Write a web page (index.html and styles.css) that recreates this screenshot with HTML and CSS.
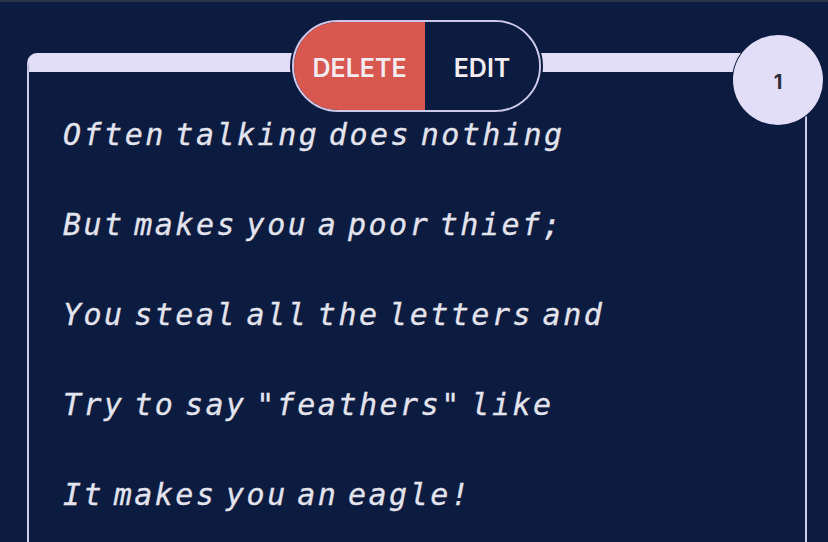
FILE: index.html
```html
<!DOCTYPE html>
<html lang="en">
<head>
<meta charset="utf-8">
<title>Poem card</title>
<link rel="stylesheet" href="styles.css">
</head>
<body>
<div class="top-strip"></div>
<main class="card">
  <div class="actions">
    <button class="btn btn-delete">DELETE</button>
    <button class="btn btn-edit">EDIT</button>
  </div>
  <div class="badge">1</div>
  <div class="poem">
    <p>Often talking does nothing</p>
    <p>But makes you a poor thief;</p>
    <p>You steal all the letters and</p>
    <p>Try to say "feathers" like</p>
    <p>It makes you an eagle!</p>
  </div>
</main>
</body>
</html>
```
FILE: styles.css
```css
html, body {
  margin: 0;
  padding: 0;
}
body {
  background: #0c1c40;
  width: 828px;
  height: 542px;
  overflow: hidden;
}
.top-strip {
  height: 2px;
  background: #2c3448;
}
.card {
  position: relative;
  box-sizing: border-box;
  margin: 51px 0 0 27px;
  width: 780px;
  height: 489px;
  border-top: 19px solid #e2ddf8;
  border-left: 2px solid #cfcbe8;
  border-right: 2px solid #cfcbe8;
  border-top-left-radius: 10px;
  border-top-right-radius: 4px;
  padding: 18px 0 0 34px;
}
.actions {
  position: absolute;
  left: 263px;
  top: -52px;
  width: 249px;
  height: 92px;
  box-sizing: border-box;
  display: flex;
  border: 2px solid #cdc8ea;
  border-radius: 46px;
  overflow: hidden;
  box-shadow: 0 0 0 2px #0c1c40;
  background: #0c1c40;
}
.btn {
  border: none;
  margin: 0;
  padding: 3px 0 0 0;
  font-family: Inter, "Noto Sans", sans-serif;
  font-size: 25px;
  font-weight: 600;
  color: #f3ecf0;
  display: flex;
  align-items: center;
  justify-content: center;
}
.btn-delete {
  width: 131px;
  background: #d8574f;
}
.btn-edit {
  flex: 1;
  background: #0c1c40;
}
.badge {
  position: absolute;
  left: 704px;
  top: -37px;
  width: 90px;
  height: 90px;
  box-sizing: border-box;
  padding-top: 4px;
  border-radius: 50%;
  background: #e2ddf8;
  box-shadow: 0 0 0 1px #0c1c40;
  display: flex;
  align-items: center;
  justify-content: center;
  font-family: Inter, "Noto Sans", sans-serif;
  font-weight: 700;
  font-size: 20px;
  color: #2e2e3e;
}
.poem p {
  margin: 0;
  font-family: "DejaVu Sans Mono", monospace;
  font-style: italic;
  font-size: 30px;
  line-height: 90px;
  letter-spacing: 2.5px;
  word-spacing: -11px;
  color: #e4e4ef;
  white-space: nowrap;
  -webkit-text-stroke: 0.3px #e4e4ef;
}
```
